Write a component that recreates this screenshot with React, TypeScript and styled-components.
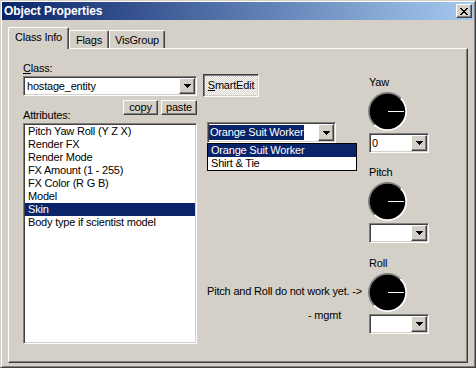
import React from "react";
import styled, { createGlobalStyle, css } from "styled-components";

const face = "#D4D0C8";
const shadow = "#808080";
const darkShadow = "#404040";
const selection = "#0A246A";

const GlobalStyle = createGlobalStyle`
  *, *::before, *::after {
    box-sizing: border-box;
  }
  html, body {
    margin: 0;
    background: ${face};
  }
  body {
    font-family: "Liberation Sans", Arial, sans-serif;
    font-size: 11px;
    line-height: 13px;
    letter-spacing: -0.2px;
    color: #000;
  }
`;

// classic 3D edges
const raised = css`
  border: 1px solid;
  border-color: #fff ${darkShadow} ${darkShadow} #fff;
  box-shadow: inset -1px -1px ${shadow}, inset 1px 1px ${face};
`;

const sunken = css`
  border: 1px solid;
  border-color: ${shadow} #fff #fff ${shadow};
  box-shadow: inset 1px 1px ${darkShadow}, inset -1px -1px ${face};
`;

const Window = styled.div`
  width: 476px;
  height: 368px;
  display: flex;
  flex-direction: column;
  padding: 1px;
  background: ${face};
  border: 1px solid;
  border-color: ${face} ${darkShadow} ${darkShadow} ${face};
  box-shadow: inset 1px 1px #fff, inset -1px -1px ${shadow};
`;

const TitleBar = styled.div`
  height: 18px;
  display: flex;
  align-items: center;
  justify-content: space-between;
  padding: 0 2px;
  background: linear-gradient(to right, ${selection}, #a6caf0);
`;

const TitleText = styled.span`
  color: #fff;
  font-weight: bold;
  font-size: 12px;
  letter-spacing: -0.1px;
`;

const CloseButton = styled.div`
  ${raised};
  width: 16px;
  height: 14px;
  background: ${face};
  display: flex;
  align-items: center;
  justify-content: center;
`;

const Client = styled.div`
  flex: 1;
  display: flex;
  flex-direction: column;
  padding: 7px 6px 3px 6px;
`;

const TabStrip = styled.div`
  height: 21px;
  display: flex;
  align-items: flex-end;
`;

const Tab = styled.div<{ $active?: boolean; $width: number }>`
  position: relative;
  width: ${(p) => p.$width}px;
  height: ${(p) => (p.$active ? 22 : 18)}px;
  margin-bottom: ${(p) => (p.$active ? -1 : 0)}px;
  z-index: ${(p) => (p.$active ? 2 : 1)};
  padding-top: 3px;
  text-align: center;
  background: ${face};
  border-top: 1px solid #fff;
  border-left: 1px solid #fff;
  border-right: 1px solid ${darkShadow};
  border-radius: 2px 2px 0 0;
  box-shadow: inset -1px 0 ${shadow};
`;

const Panel = styled.div`
  flex: 1;
  display: flex;
  padding-left: 14px;
  border: 1px solid;
  border-color: #fff ${darkShadow} ${darkShadow} #fff;
  box-shadow: inset -1px -1px ${shadow};
`;

const LeftColumn = styled.div`
  width: 174px;
  display: flex;
  flex-direction: column;
`;

const MiddleColumn = styled.div`
  width: 165px;
  margin-left: 6px;
  display: flex;
  flex-direction: column;
  align-items: flex-start;
`;

const RightColumn = styled.div`
  width: 61px;
  display: flex;
  flex-direction: column;
`;

const Label = styled.div<{ $top?: number }>`
  margin-top: ${(p) => p.$top ?? 0}px;
  white-space: nowrap;
`;

const Combo = styled.div<{ $width: number; $top?: number; $left?: number; $height?: number }>`
  ${sunken};
  position: relative;
  width: ${(p) => p.$width}px;
  height: ${(p) => p.$height ?? 20}px;
  margin-top: ${(p) => p.$top ?? 0}px;
  margin-left: ${(p) => p.$left ?? 0}px;
  padding: 1px;
  display: flex;
  background: #fff;
`;

const ComboText = styled.div<{ $pad?: number }>`
  flex: 1;
  display: flex;
  align-items: center;
  padding-left: ${(p) => p.$pad ?? 2}px;
  white-space: nowrap;
  overflow: hidden;
`;

const SelectedText = styled.span`
  background: ${selection};
  color: #fff;
  line-height: 15px;
  padding: 0 1px;
`;

const DropButton = styled.div`
  ${raised};
  width: 16px;
  background: ${face};
  display: flex;
  align-items: center;
  justify-content: center;
`;

const DropList = styled.div`
  position: absolute;
  top: calc(100% + 1px);
  left: -1px;
  width: 150px;
  border: 1px solid #000;
  background: #fff;
  z-index: 3;
`;

const ButtonRow = styled.div`
  height: 23px;
  margin-top: 4px;
  display: flex;
  align-items: flex-start;
`;

const PushButton = styled.div<{ $width: number }>`
  ${raised};
  width: ${(p) => p.$width}px;
  height: 15px;
  margin-left: 3px;
  background: ${face};
  display: flex;
  align-items: center;
  justify-content: center;
`;

const AttrLabel = styled.div`
  align-self: flex-end;
  margin-bottom: 1px;
  margin-right: auto;
`;

const ListBox = styled.div`
  ${sunken};
  height: 221px;
  padding: 1px;
  background: #fff;
`;

const ListItem = styled.div<{ $selected?: boolean }>`
  height: 13px;
  padding-left: 3px;
  white-space: nowrap;
  background: ${(p) => (p.$selected ? selection : "transparent")};
  color: ${(p) => (p.$selected ? "#fff" : "#000")};
`;

const ToggleButton = styled.div`
  width: 56px;
  height: 23px;
  margin-top: 25px;
  display: flex;
  align-items: center;
  justify-content: center;
  border: 1px solid;
  border-color: ${darkShadow} #fff #fff ${darkShadow};
  box-shadow: inset 1px 1px ${shadow}, inset -1px -1px ${face};
  background: repeating-conic-gradient(#fff 0 25%, ${face} 0 50%) 0 0 / 2px 2px;
`;

const Note = styled.div<{ $top: number; $right: number }>`
  align-self: stretch;
  margin-top: ${(p) => p.$top}px;
  padding-right: ${(p) => p.$right}px;
  text-align: right;
  white-space: nowrap;
`;

const AngleGroup = styled.div<{ $top: number }>`
  margin-top: ${(p) => p.$top}px;
  display: flex;
  flex-direction: column;
`;

const AngleLabel = styled.div`
  margin-left: 1px;
  margin-bottom: 3px;
`;

const DialSvg = styled.svg`
  display: block;
  margin-bottom: 2px;
`;

const Arrow = () => (
  <svg width="7" height="4" viewBox="0 0 7 4" shapeRendering="crispEdges">
    <path d="M0 0h7v1H0zM1 1h5v1H1zM2 2h3v1H2zM3 3h1v1H3z" fill="#000" />
  </svg>
);

const CloseGlyph = () => (
  <svg width="8" height="7" viewBox="0 0 8 7" shapeRendering="crispEdges">
    <path
      d="M0 0h2v1H0zM6 0h2v1H6zM1 1h2v1H1zM5 1h2v1H5zM2 2h4v1H2zM3 3h2v1H3zM2 4h4v1H2zM1 5h2v1H1zM5 5h2v1H5zM0 6h2v1H0zM6 6h2v1H6z"
      fill="#000"
    />
  </svg>
);

const Dial: React.FC<{ id: string }> = ({ id }) => (
  <DialSvg width="39" height="39" viewBox="0 0 39 39">
    <defs>
      <linearGradient id={id} x1="0" y1="0" x2="1" y2="1">
        <stop offset="0.5" stopColor={shadow} />
        <stop offset="0.5" stopColor="#fff" />
      </linearGradient>
    </defs>
    <circle cx="19.5" cy="19.5" r="19.5" fill={`url(#${id})`} />
    <circle cx="19.5" cy="19.5" r="17.8" fill="#000" />
    <line x1="20" y1="19.5" x2="36" y2="19.5" stroke="#fff" strokeWidth="1" />
  </DialSvg>
);

const attributes = [
  "Pitch Yaw Roll (Y Z X)",
  "Render FX",
  "Render Mode",
  "FX Amount (1 - 255)",
  "FX Color (R G B)",
  "Model",
  "Skin",
  "Body type if scientist model",
];

const angles = [
  { name: "Yaw", value: "0", top: 27 },
  { name: "Pitch", value: "", top: 13 },
  { name: "Roll", value: "", top: 14 },
];

const App: React.FC = () => {
  return (
    <>
      <GlobalStyle />
      <Window>
        <TitleBar>
          <TitleText>Object Properties</TitleText>
          <CloseButton>
            <CloseGlyph />
          </CloseButton>
        </TitleBar>
        <Client>
          <TabStrip>
            <Tab $active $width={61}>Class Info</Tab>
            <Tab $width={40}>Flags</Tab>
            <Tab $width={56}>VisGroup</Tab>
          </TabStrip>
          <Panel>
            <LeftColumn>
              <Label $top={13}>
                <u>C</u>lass:
              </Label>
              <Combo $width={174} $top={1}>
                <ComboText>hostage_entity</ComboText>
                <DropButton>
                  <Arrow />
                </DropButton>
              </Combo>
              <ButtonRow>
                <AttrLabel>Attributes:</AttrLabel>
                <PushButton $width={35}>copy</PushButton>
                <PushButton $width={36}>paste</PushButton>
              </ButtonRow>
              <ListBox>
                {attributes.map((a) => (
                  <ListItem key={a} $selected={a === "Skin"}>
                    {a}
                  </ListItem>
                ))}
              </ListBox>
            </LeftColumn>
            <MiddleColumn>
              <ToggleButton>
                <span>
                  <u>S</u>martEdit
                </span>
              </ToggleButton>
              <Combo $width={129} $height={21} $top={25} $left={4}>
                <ComboText $pad={0}>
                  <SelectedText>Orange Suit Worker</SelectedText>
                </ComboText>
                <DropButton>
                  <Arrow />
                </DropButton>
                <DropList>
                  <ListItem $selected>Orange Suit Worker</ListItem>
                  <ListItem>Shirt &amp; Tie</ListItem>
                </DropList>
              </Combo>
              <Note $top={142} $right={6}>
                Pitch and Roll do not work yet. -&gt;
              </Note>
              <Note $top={11} $right={27}>
                - mgmt
              </Note>
            </MiddleColumn>
            <RightColumn>
              {angles.map((a) => (
                <AngleGroup key={a.name} $top={a.top}>
                  <AngleLabel>{a.name}</AngleLabel>
                  <Dial id={`dial-${a.name}`} />
                  <Combo $width={60} $left={1}>
                    <ComboText $pad={1}>{a.value}</ComboText>
                    <DropButton>
                      <Arrow />
                    </DropButton>
                  </Combo>
                </AngleGroup>
              ))}
            </RightColumn>
          </Panel>
        </Client>
      </Window>
    </>
  );
};

export default App;
